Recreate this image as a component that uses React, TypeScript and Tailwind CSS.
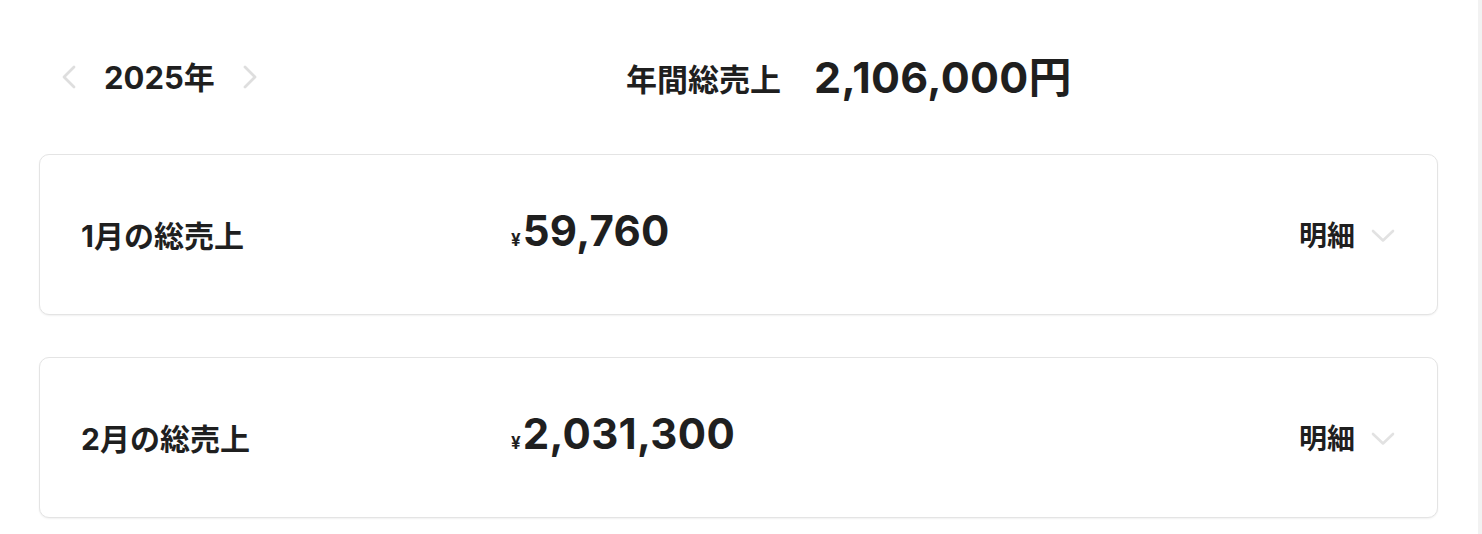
const months = [
  { label: "1月の総売上", amount: "59,760" },
  { label: "2月の総売上", amount: "2,031,300" },
];

function ChevronDown() {
  return (
    <svg width="24" height="14" viewBox="0 0 24 14" fill="none" className="shrink-0">
      <polyline
        points="2,2 12,11.5 22,2"
        stroke="#e2e2e2"
        strokeWidth="2.6"
        strokeLinecap="round"
        strokeLinejoin="round"
      />
    </svg>
  );
}

function NavChevron({ dir }: { dir: "left" | "right" }) {
  const points = dir === "left" ? "12,2 2,12 12,22" : "2,2 12,12 2,22";
  return (
    <svg width="14" height="24" viewBox="0 0 14 24" fill="none" className="shrink-0">
      <polyline
        points={points}
        stroke="#dedede"
        strokeWidth="2.8"
        strokeLinecap="round"
        strokeLinejoin="round"
      />
    </svg>
  );
}

function MonthCard({ label, amount }: { label: string; amount: string }) {
  return (
    <div className="flex h-[161px] items-center rounded-[10px] border border-[#e4e4e4] bg-white pl-[41px] pr-[42px] shadow-[0_1px_2px_rgba(0,0,0,0.06)]">
      <div className="w-[430px] pt-[3px] text-[30px] font-bold leading-none text-[#1f1f1f]">{label}</div>
      <div className="mb-[6px] flex flex-1 items-baseline text-[#1f1f1f]">
        <span className="mr-[2px] text-[17px] font-bold">¥</span>
        <span className="text-[42px] font-bold leading-none tracking-[0.3px]">{amount}</span>
      </div>
      <div className="flex items-center gap-[16px] pt-[3px]">
        <span className="text-[28px] font-bold leading-none text-[#1f1f1f]">明細</span>
        <ChevronDown />
      </div>
    </div>
  );
}

export default function App() {
  return (
    <div className="flex min-h-[534px] bg-white font-['Inter','Noto_Sans_CJK_JP',sans-serif]">
      <main className="flex-1 pl-[39px] pr-[40px]">
        <header className="mt-[47px] flex h-[60px] items-center">
          <div className="flex w-[587px] items-center pl-[23px]">
            <NavChevron dir="left" />
            <span className="ml-[28px] w-[139px] text-[31px] font-bold leading-none text-[#1f1f1f]">2025年</span>
            <NavChevron dir="right" />
          </div>
          <div className="flex items-center gap-[33px] text-[#1f1f1f]">
            <span className="pt-[4px] text-[31px] font-bold leading-none">年間総売上</span>
            <span className="text-[43px] font-bold leading-none tracking-[0.3px]">2,106,000円</span>
          </div>
        </header>
        <section className="mt-[47px] flex flex-col gap-[42px]">
          {months.map((m) => (
            <MonthCard key={m.label} label={m.label} amount={m.amount} />
          ))}
        </section>
      </main>
      <div className="w-[4px] shrink-0 bg-[#f2f2f2]" />
    </div>
  );
}
